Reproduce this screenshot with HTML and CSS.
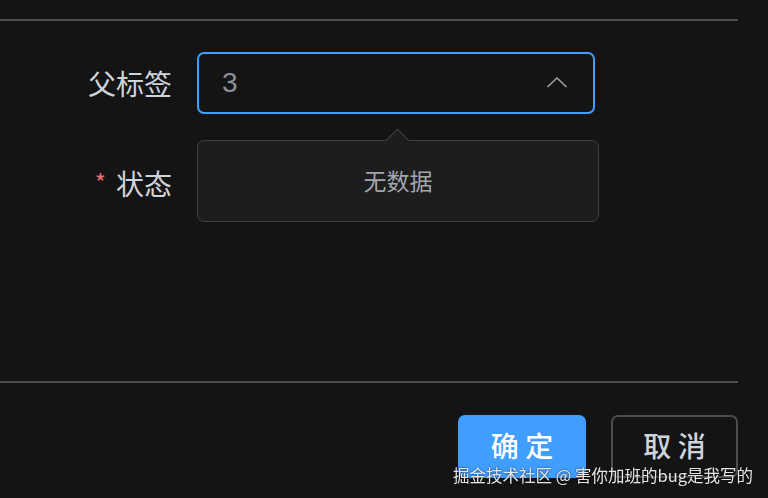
FILE: index.html
```html
<!DOCTYPE html>
<html lang="zh-CN">
  <head>
    <meta charset="UTF-8" />
    <meta name="viewport" content="width=device-width, initial-scale=1.0" />
    <title>编辑标签</title>
    <link rel="stylesheet" href="styles.css">
  </head>
  <body>
    <div class="dialog">
      <div class="divider"></div>

      <div class="dialog-body">
        <div class="form-item">
          <label class="label">父标签</label>
          <div class="select-wrap">
            <div class="select">
              <span class="select-value">3</span>
              <svg class="arrow" width="22" height="12" viewBox="0 0 22 12">
                <path d="M1.5 11 L11 2 L20.5 11" fill="none" stroke="#a3a6ad" stroke-width="1.5" />
              </svg>
            </div>
            <div class="popper">
              <span class="popper-arrow"></span>
              <p class="empty">无数据</p>
            </div>
          </div>
        </div>

        <div class="form-item second">
          <label class="label"><span class="required">*</span>状态</label>
        </div>
      </div>

      <div class="divider"></div>

      <div class="footer">
        <button class="btn primary">确 定</button>
        <button class="btn">取 消</button>
      </div>
    </div>

    <div class="watermark">掘金技术社区 @ 害你加班的bug是我写的</div>
  </body>
</html>
```

FILE: styles.css
```css
body {
  margin: 0;
  height: 498px;
  overflow: hidden;
  background-color: #141414;
  font-family: "Noto Sans CJK SC", "Noto Sans", sans-serif;
  color: #cfd3dc;
}
.dialog {
  width: 738px;
  padding-top: 19px;
}
.divider {
  height: 2px;
  background-color: #4c4d4f;
}
.dialog-body {
  height: 360px;
  padding-top: 31px;
  box-sizing: border-box;
}
.form-item {
  display: flex;
  align-items: center;
  height: 62px;
}
.form-item.second {
  margin-top: 38px;
}
.label {
  width: 197px;
  padding-right: 25px;
  box-sizing: border-box;
  text-align: right;
  font-size: 28px;
  line-height: 1;
  color: #cfd3dc;
}
.required {
  color: #f56c6c;
  font-size: 24px;
  margin-right: 10px;
  position: relative;
  top: -3px;
}
.select-wrap {
  position: relative;
}
.select {
  width: 398px;
  height: 62px;
  box-sizing: border-box;
  border: 2px solid #409eff;
  border-radius: 7px;
  display: flex;
  align-items: center;
  justify-content: space-between;
  padding: 0 25px 0 23px;
}
.select-value {
  font-family: "Liberation Sans", sans-serif;
  font-size: 28px;
  color: #8d9095;
}
.arrow {
  margin-top: -2px;
}
.popper {
  position: absolute;
  top: 88px;
  left: 0;
  width: 402px;
  height: 82px;
  box-sizing: border-box;
  background-color: #1d1d1d;
  border: 1px solid #404040;
  border-radius: 7px;
  display: flex;
  align-items: center;
  justify-content: center;
  z-index: 2;
}
.popper-arrow {
  position: absolute;
  top: -9px;
  left: 191px;
  width: 16px;
  height: 16px;
  background-color: #1d1d1d;
  border-top: 1px solid #404040;
  border-left: 1px solid #404040;
  transform: rotate(45deg);
}
.empty {
  margin: 0 0 2px;
  font-size: 23px;
  color: #a3a6ad;
}
.footer {
  display: flex;
  justify-content: flex-end;
  gap: 25px;
  padding-top: 32px;
}
.btn {
  width: 127px;
  height: 63px;
  border: 2px solid #4c4d4f;
  border-radius: 7px;
  background-color: transparent;
  color: #cfd3dc;
  font-family: "Noto Sans CJK SC", sans-serif;
  font-size: 28px;
  font-weight: 500;
  padding: 0 0 4px;
}
.btn.primary {
  width: 128px;
  background-color: #409eff;
  border-color: #409eff;
  color: #ffffff;
}
.watermark {
  position: fixed;
  right: 15px;
  bottom: 15px;
  font-size: 16.5px;
  line-height: 1;
  color: #e6e6e6;
  text-shadow: 0 0 2px rgba(0, 0, 0, 0.8);
}
```
